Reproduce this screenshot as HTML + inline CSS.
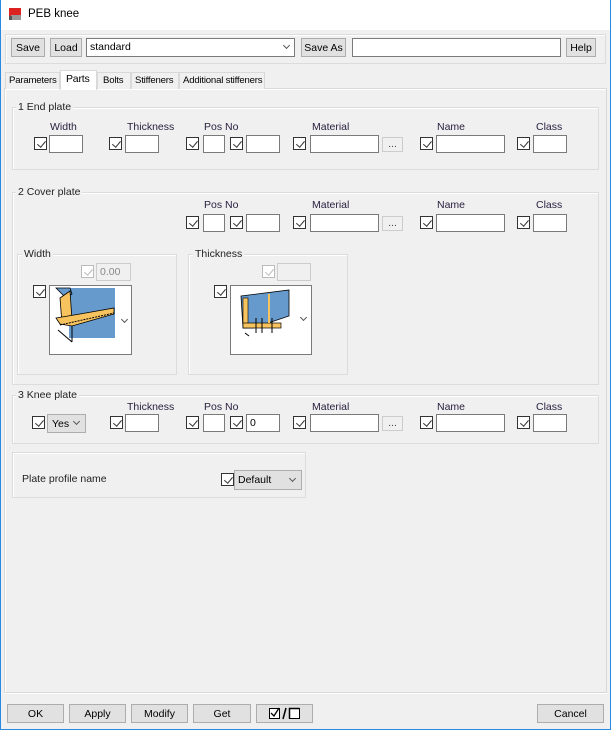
<!DOCTYPE html>
<html><head><meta charset="utf-8"><style>
*{box-sizing:border-box;margin:0;padding:0}
body{width:611px;height:730px;background:#f0f0f0;font-family:"Liberation Sans",Arial,sans-serif;font-size:10.5px;color:#000;position:relative;overflow:hidden}
.a{position:absolute}
.win{left:0;top:0;width:611px;height:730px;border:1px solid #2b8ae0;border-top:none}
.title{left:1px;top:0;width:609px;height:30px;background:#fff}
.btn{position:absolute;background:#e1e1e1;border:1px solid #adadad;text-align:center;line-height:18px;font-size:10.5px;color:#000;white-space:nowrap}
.in{position:absolute;background:#fff;border:1px solid #7a7a7a;height:18px;font-size:10.5px;line-height:16px;padding-left:3px}
.dis{background:#f0f0f0;border-color:#ccc;color:#888}
.cb{position:absolute;width:13px;height:13px;border:1px solid #333;background:#fff}
.cb:after{content:"";position:absolute;left:3.5px;top:1px;width:3.5px;height:7px;border:solid #333;border-width:0 1px 1px 0;transform:rotate(40deg)}
.cb.d{border-color:#bbb}.cb.d:after{border-color:#bbb}
.grp{position:absolute;border:1px solid #dcdcdc;box-shadow:inset 1px 1px 0 #fff}
.gl{position:absolute;background:#f0f0f0;padding:0 2px;font-size:10.5px;color:#222;white-space:nowrap}
.lb{position:absolute;font-size:10.5px;color:#2a2040;white-space:nowrap}
.tab{position:absolute;top:72px;height:17px;border:1px solid #d9d9d9;border-bottom:none;background:#f0f0f0;font-size:9.6px;line-height:15px;padding-left:3px;white-space:nowrap;overflow:hidden;letter-spacing:-0.2px}
.chev{position:absolute;width:5px;height:5px;border:solid #555;border-width:0 1px 1px 0;transform:rotate(45deg)}
</style></head><body>
<div class="a win"></div>
<div class="a title"></div>
<svg class="a" style="left:8px;top:7px" width="15" height="14"><rect x="1" y="1" width="12" height="8" fill="#d22"/><rect x="3" y="8" width="10" height="5" fill="#999"/><rect x="1" y="9" width="3" height="4" fill="#555"/></svg>
<div class="a" style="left:28px;top:8px;font-size:11.5px">PEB knee</div>

<div class="grp" style="left:5px;top:34px;width:601px;height:30px"></div>
<div class="btn" style="left:11px;top:38px;width:34px;height:19px">Save</div>
<div class="btn" style="left:50px;top:38px;width:32px;height:19px">Load</div>
<div class="in" style="left:86px;top:38px;width:209px;height:19px">standard</div>
<div class="chev" style="left:284px;top:43px"></div>
<div class="btn" style="left:301px;top:38px;width:45px;height:19px">Save As</div>
<div class="in" style="left:352px;top:38px;width:209px;height:19px"></div>
<div class="btn" style="left:566px;top:38px;width:30px;height:19px">Help</div>

<div class="a" style="left:4px;top:88px;width:603px;height:605px;border:1px solid #d9d9d9;box-shadow:inset 1px 1px 0 #fff, 0 1px 0 #fff"></div>
<div class="tab" style="left:5px;width:55px">Parameters</div>
<div class="tab" style="left:97px;width:34px;padding-left:5px">Bolts</div>
<div class="tab" style="left:131px;width:48px">Stiffeners</div>
<div class="tab" style="left:179px;width:86px">Additional stiffeners</div>
<div class="tab" style="left:60px;top:70px;width:37px;height:20px;background:#fff;border-color:#d9d9d9;line-height:16px;padding-left:5px;font-size:10.5px">Parts</div>

<!-- group 1 -->
<div class="grp" style="left:12px;top:107px;width:587px;height:63px"></div>
<div class="gl" style="left:16px;top:101px">1 End plate</div>
<div class="lb" style="left:50px;top:121px">Width</div>
<div class="lb" style="left:127px;top:121px">Thickness</div>
<div class="lb" style="left:204px;top:121px">Pos No</div>
<div class="lb" style="left:312px;top:121px">Material</div>
<div class="lb" style="left:437px;top:121px">Name</div>
<div class="lb" style="left:536px;top:121px">Class</div>
<div class="cb" style="left:34px;top:137px"></div><div class="in" style="left:49px;top:135px;width:34px"></div>
<div class="cb" style="left:109px;top:137px"></div><div class="in" style="left:125px;top:135px;width:34px"></div>
<div class="cb" style="left:186px;top:137px"></div><div class="in" style="left:203px;top:135px;width:22px"></div>
<div class="cb" style="left:230px;top:137px"></div><div class="in" style="left:246px;top:135px;width:34px"></div>
<div class="cb" style="left:293px;top:137px"></div><div class="in" style="left:310px;top:135px;width:69px"></div>
<div class="btn dis" style="left:382px;top:137px;width:21px;height:15px;line-height:12px;color:#444">...</div>
<div class="cb" style="left:420px;top:137px"></div><div class="in" style="left:436px;top:135px;width:69px"></div>
<div class="cb" style="left:517px;top:137px"></div><div class="in" style="left:533px;top:135px;width:34px"></div>

<!-- group 2 -->
<div class="grp" style="left:12px;top:192px;width:587px;height:193px"></div>
<div class="gl" style="left:16px;top:186px">2 Cover plate</div>
<div class="lb" style="left:204px;top:199px">Pos No</div>
<div class="lb" style="left:312px;top:199px">Material</div>
<div class="lb" style="left:437px;top:199px">Name</div>
<div class="lb" style="left:536px;top:199px">Class</div>
<div class="cb" style="left:186px;top:216px"></div><div class="in" style="left:203px;top:214px;width:22px"></div>
<div class="cb" style="left:230px;top:216px"></div><div class="in" style="left:246px;top:214px;width:34px"></div>
<div class="cb" style="left:293px;top:216px"></div><div class="in" style="left:310px;top:214px;width:69px"></div>
<div class="btn dis" style="left:382px;top:216px;width:21px;height:15px;line-height:12px;color:#444">...</div>
<div class="cb" style="left:420px;top:216px"></div><div class="in" style="left:436px;top:214px;width:69px"></div>
<div class="cb" style="left:517px;top:216px"></div><div class="in" style="left:533px;top:214px;width:34px"></div>

<div class="grp" style="left:17px;top:254px;width:160px;height:121px"></div>
<div class="gl" style="left:22px;top:248px">Width</div>
<div class="cb d" style="left:81px;top:265px"></div><div class="in dis" style="left:96px;top:263px;width:35px">0.00</div>
<div class="cb" style="left:33px;top:285px"></div>
<div class="a" style="left:49px;top:285px;width:83px;height:70px;background:#fff;border:1px solid #7a7a7a"></div>
<svg class="a" style="left:50px;top:286px" width="70" height="68">
<rect x="19" y="2" width="46" height="50" fill="#6699cc"/>
<polygon points="6,2 16,12 22,8 20,2" fill="#6699cc" stroke="#000" stroke-width="0.8"/>
<polygon points="10,12 20,5 22,34 12,38" fill="#f7c35f" stroke="#000" stroke-width="0.8"/>
<polygon points="6,32 30,28 64,22 64,28 22,40 10,38" fill="#f7c35f" stroke="#000" stroke-width="0.8"/>
<line x1="10" y1="39" x2="64" y2="27" stroke="#000" stroke-dasharray="2,1"/>
<line x1="22" y1="40" x2="22" y2="56" stroke="#000"/><line x1="8" y1="44" x2="22" y2="56" stroke="#000"/>
</svg>
<div class="chev" style="left:122px;top:317px"></div>

<div class="grp" style="left:188px;top:254px;width:160px;height:121px"></div>
<div class="gl" style="left:193px;top:248px">Thickness</div>
<div class="cb d" style="left:262px;top:265px"></div><div class="in dis" style="left:277px;top:263px;width:34px"></div>
<div class="cb" style="left:214px;top:285px"></div>
<div class="a" style="left:230px;top:285px;width:82px;height:70px;background:#fff;border:1px solid #7a7a7a"></div>
<svg class="a" style="left:231px;top:286px" width="70" height="68">
<polygon points="10,10 58,4 58,30 22,42 12,42" fill="#6699cc" stroke="#000" stroke-width="0.8"/>
<rect x="12" y="12" width="5" height="30" fill="#f7c35f" stroke="#000" stroke-width="0.6"/>
<rect x="12" y="37" width="38" height="5" fill="#f7c35f" stroke="#000" stroke-width="0.7"/>
<line x1="38" y1="8" x2="38" y2="37" stroke="#f7c35f" stroke-width="2"/>
<line x1="25" y1="32" x2="25" y2="47" stroke="#000"/><line x1="31" y1="32" x2="31" y2="47" stroke="#000"/><line x1="41" y1="32" x2="41" y2="47" stroke="#000"/>
<line x1="14" y1="47" x2="18" y2="50" stroke="#000"/>
</svg>
<div class="chev" style="left:301px;top:315px"></div>

<!-- group 3 -->
<div class="grp" style="left:12px;top:395px;width:587px;height:49px"></div>
<div class="gl" style="left:16px;top:389px">3 Knee plate</div>
<div class="lb" style="left:127px;top:401px">Thickness</div>
<div class="lb" style="left:204px;top:401px">Pos No</div>
<div class="lb" style="left:312px;top:401px">Material</div>
<div class="lb" style="left:437px;top:401px">Name</div>
<div class="lb" style="left:536px;top:401px">Class</div>
<div class="cb" style="left:32px;top:416px"></div>
<div class="btn" style="left:47px;top:414px;width:39px;height:19px;text-align:left;padding-left:4px">Yes</div><div class="chev" style="left:74px;top:419px"></div>
<div class="cb" style="left:110px;top:416px"></div><div class="in" style="left:125px;top:414px;width:34px"></div>
<div class="cb" style="left:186px;top:416px"></div><div class="in" style="left:203px;top:414px;width:22px"></div>
<div class="cb" style="left:230px;top:416px"></div><div class="in" style="left:246px;top:414px;width:34px">0</div>
<div class="cb" style="left:293px;top:416px"></div><div class="in" style="left:310px;top:414px;width:69px"></div>
<div class="btn dis" style="left:382px;top:416px;width:21px;height:15px;line-height:12px;color:#444">...</div>
<div class="cb" style="left:420px;top:416px"></div><div class="in" style="left:436px;top:414px;width:69px"></div>
<div class="cb" style="left:517px;top:416px"></div><div class="in" style="left:533px;top:414px;width:34px"></div>

<div class="grp" style="left:12px;top:452px;width:294px;height:46px"></div>
<div class="lb" style="left:22px;top:473px;color:#222">Plate profile name</div>
<div class="cb" style="left:221px;top:473px"></div>
<div class="btn" style="left:234px;top:470px;width:68px;height:20px;text-align:left;padding-left:3px;line-height:19px">Default</div><div class="chev" style="left:290px;top:476px"></div>

<!-- bottom -->
<div class="btn" style="left:7px;top:704px;width:57px;height:19px">OK</div>
<div class="btn" style="left:69px;top:704px;width:57px;height:19px">Apply</div>
<div class="btn" style="left:131px;top:704px;width:57px;height:19px">Modify</div>
<div class="btn" style="left:193px;top:704px;width:58px;height:19px">Get</div>
<div class="btn" style="left:256px;top:704px;width:57px;height:19px"></div>
<svg class="a" style="left:268px;top:706px" width="34" height="15"><rect x="1.5" y="2.5" width="10" height="10" fill="#fff" stroke="#000"/><path d="M3 7 L6 10 L11 2" stroke="#000" fill="none" stroke-width="1.3"/><line x1="15" y1="13" x2="18" y2="2" stroke="#000" stroke-width="1.5"/><rect x="21.5" y="2.5" width="10" height="10" fill="#fff" stroke="#000"/><path d="M21.5 12.5 V2.5 H31.5" stroke="#000" fill="none" stroke-width="1.5"/></svg>
<div class="btn" style="left:537px;top:704px;width:67px;height:19px">Cancel</div>
</body></html>
